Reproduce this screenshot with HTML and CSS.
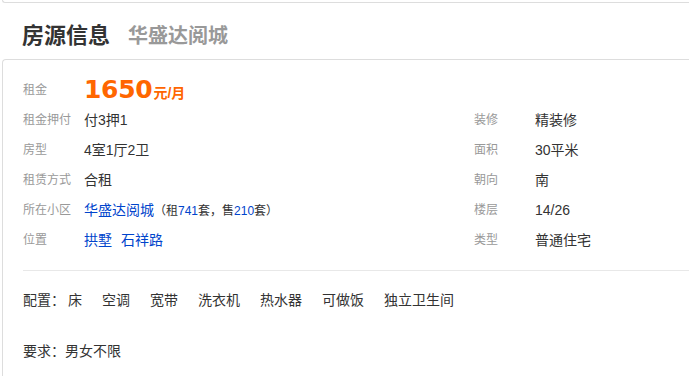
FILE: index.html
```html
<!DOCTYPE html>
<html lang="zh-CN">
<head>
  <meta charset="UTF-8" />
  <title>房源信息</title>
  <link rel="stylesheet" href="styles.css">
</head>
<body>
  <div class="prev-box"></div>

  <h2 class="title">房源信息<span class="sub">华盛达阅城</span></h2>

  <div class="info-box">
    <div class="grid">
      <div class="label">租金</div>
      <div class="value price-cell"><span class="price">1650</span><span class="unit">元/月</span></div>

      <div class="label">租金押付</div>
      <div class="value">付3押1</div>
      <div class="label">装修</div>
      <div class="value">精装修</div>

      <div class="label">房型</div>
      <div class="value">4室1厅2卫</div>
      <div class="label">面积</div>
      <div class="value">30平米</div>

      <div class="label">租赁方式</div>
      <div class="value">合租</div>
      <div class="label">朝向</div>
      <div class="value">南</div>

      <div class="label">所在小区</div>
      <div class="value"><a href="#" class="link">华盛达阅城</a><span class="count">（租<em>741</em>套，售<em>210</em>套）</span></div>
      <div class="label">楼层</div>
      <div class="value">14/26</div>

      <div class="label">位置</div>
      <div class="value"><a href="#" class="link">拱墅</a><a href="#" class="link gap">石祥路</a></div>
      <div class="label">类型</div>
      <div class="value">普通住宅</div>
    </div>

    <hr class="line">

    <div class="config">
      <span>配置：</span><span class="item">床</span><span class="item">空调</span><span class="item">宽带</span><span class="item">洗衣机</span><span class="item">热水器</span><span class="item">可做饭</span><span class="item">独立卫生间</span>
    </div>
    <div class="require">要求：男女不限</div>
  </div>
</body>
</html>
```

FILE: styles.css
```css
body {
  margin: 0;
  font-family: "Liberation Sans", "Noto Sans CJK SC", sans-serif;
  font-size: 14px;
  color: #333;
  background: #fff;
  overflow: hidden;
}
.prev-box {
  height: 2px;
  margin-left: 2px;
  border-left: 1px solid #ddd;
  border-bottom: 1px solid #ddd;
  border-bottom-left-radius: 4px;
}
.title {
  margin: 0;
  padding: 18px 0 8px 22px;
  font-size: 22px;
  line-height: 30px;
  font-weight: bold;
  color: #333;
}
.sub {
  margin-left: 18px;
  font-size: 20px;
  color: #999;
}
.info-box {
  margin-left: 2px;
  border-top: 1px solid #ddd;
  border-left: 1px solid #ddd;
  border-top-left-radius: 4px;
  padding: 15px 0 0 20px;
  height: 301px;
}
.grid {
  display: grid;
  grid-template-columns: 61px 390px 61px 1fr;
  grid-auto-rows: 30px;
  line-height: 30px;
}
.label {
  font-size: 12px;
  color: #999;
}
.value {
  white-space: nowrap;
}
.price-cell {
  grid-column: 2 / 5;
  color: #ff6600;
}
.price {
  font-family: "DejaVu Sans", sans-serif;
  font-size: 25px;
  font-weight: bold;
  letter-spacing: -0.3px;
}
.unit {
  font-size: 14px;
  font-weight: bold;
  margin-left: 1px;
}
.link {
  color: #0044cc;
  text-decoration: none;
}
.gap {
  margin-left: 9px;
}
.count {
  font-size: 12px;
  color: #333;
}
.count em {
  font-style: normal;
  color: #0044cc;
}
.line {
  margin: 15px 0 0;
  border: none;
  border-top: 1px solid #e8e8e8;
}
.config {
  margin-top: 14px;
  line-height: 30px;
}
.config .item {
  margin-right: 20px;
}
.config span:first-child + .item {
  margin-left: 3px;
}
.require {
  margin-top: 21px;
  line-height: 30px;
}
```
